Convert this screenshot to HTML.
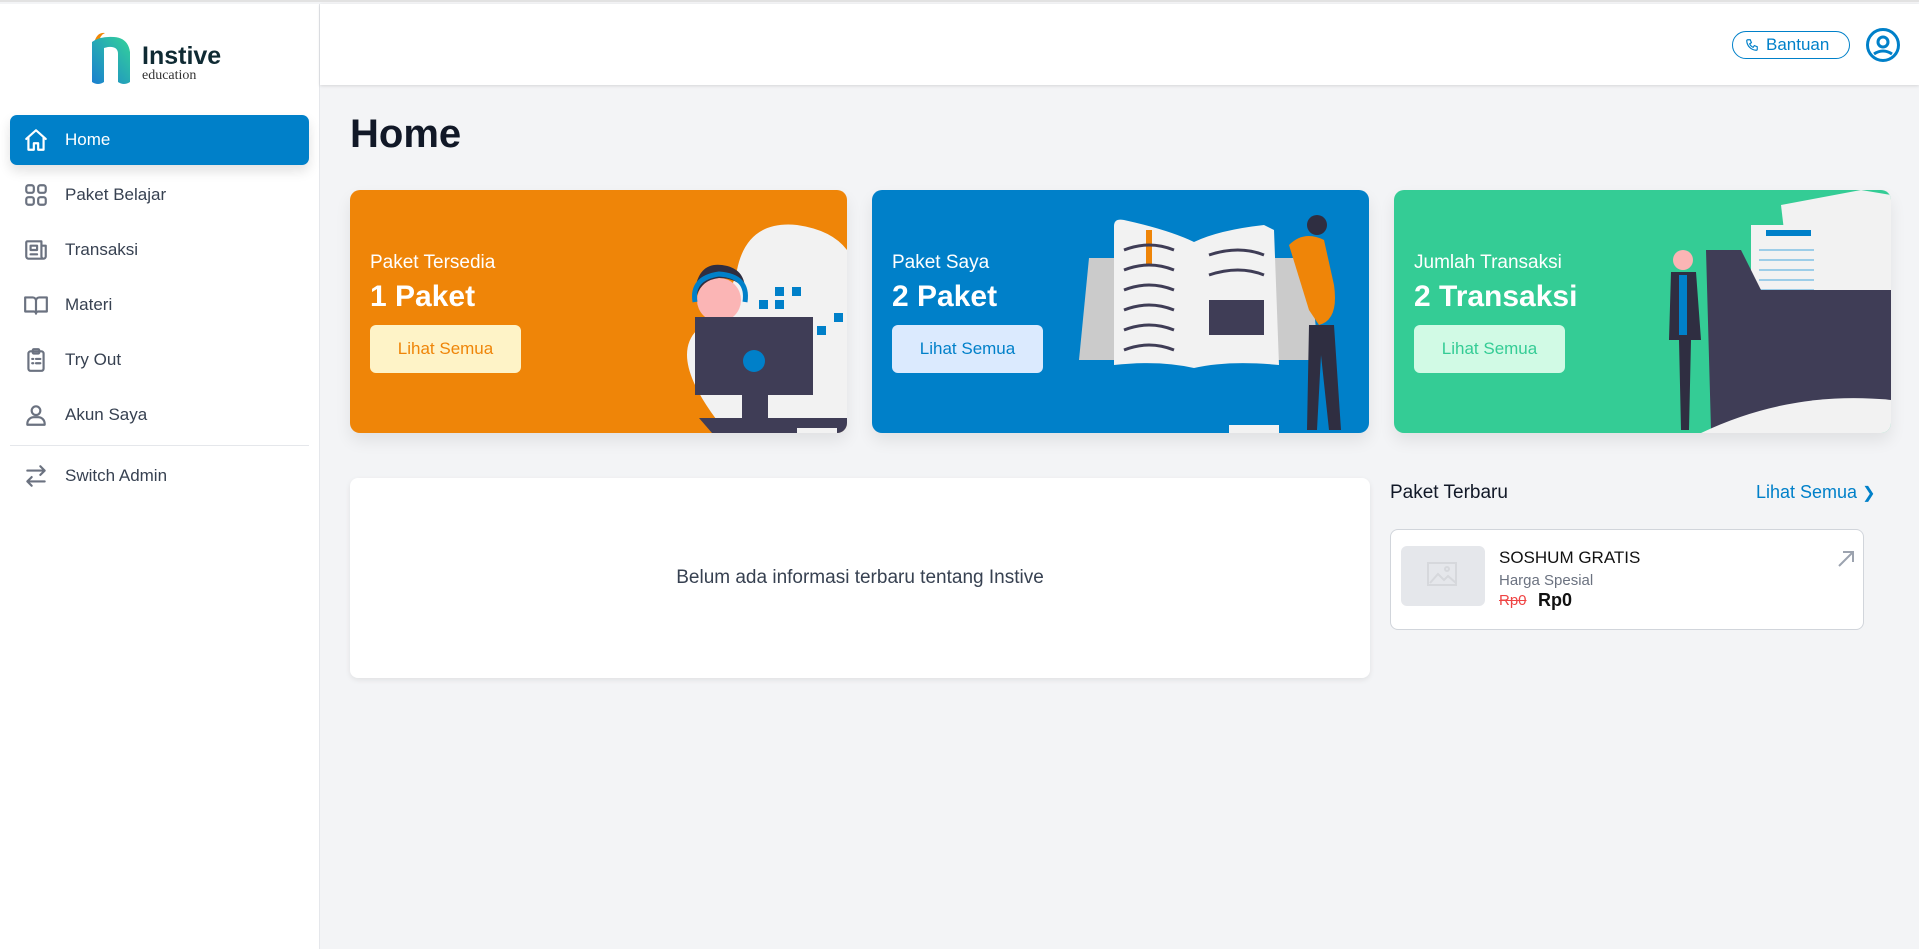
<!DOCTYPE html>
<html><head><meta charset="utf-8"><style>
*{box-sizing:border-box;margin:0;padding:0}
body{width:1919px;height:947px;overflow:hidden;background:#f3f4f6;font-family:"Liberation Sans",sans-serif;position:relative;border-top:2px solid #e2e2e2}
.side{position:absolute;left:0;top:2px;width:320px;height:945px;background:#fff;border-right:1px solid #e5e7eb}
.hdr{position:absolute;left:320px;top:2px;right:0;height:81px;background:#fff;box-shadow:0 1px 3px rgba(0,0,0,.12)}
.nav{position:absolute;left:10px;width:299px;height:50px;border-radius:7px;display:flex;align-items:center;font-size:17px;color:#374151}
.nav svg{position:absolute;left:13px;width:26px;height:26px;fill:none;stroke:#6b7280;stroke-width:2;stroke-linecap:round;stroke-linejoin:round}
.nav span{position:absolute;left:55px}
.nav.act{background:#0080c9;color:#fff;box-shadow:0 6px 12px rgba(0,0,0,.12)}
.nav.act svg{stroke:#fff}
.card{position:absolute;top:188px;width:497px;height:243px;border-radius:10px;overflow:hidden;box-shadow:0 8px 16px rgba(0,0,0,.08)}
.card .t{position:absolute;left:20px;top:62px;color:#fff;font-size:19px}
.card .n{position:absolute;left:20px;top:90px;color:#fff;font-size:30px;font-weight:bold}
.card .b{position:absolute;left:20px;top:135px;width:151px;height:48px;border-radius:6px;font-size:17px;display:flex;align-items:center;justify-content:center}
.card svg{position:absolute;right:0;top:0}
</style></head><body>
<div class="side">
 <svg style="position:absolute;left:90px;top:26px" width="50" height="56" viewBox="0 0 50 56"><defs><linearGradient id="g" x1="0" y1="1" x2="1" y2="0"><stop offset="0" stop-color="#1a7fd0"/><stop offset="1" stop-color="#34d399"/></linearGradient></defs><path d="M5 10 Q8 2 15 3 Q10 5 9 12Z" fill="#f08708"/><path d="M2 12 Q10 6 24 7 Q38 8 40 22 L40 52 Q34 56 28 52 L28 24 Q28 16 18 17 L14 18 L14 52 Q8 56 2 52Z" fill="url(#g)"/></svg>
 <div style="position:absolute;left:142px;top:38px;font-size:25px;font-weight:bold;color:#0f2a33">Instive</div>
 <div style="position:absolute;left:142px;top:64px;font-size:14px;color:#333;font-family:'Liberation Serif',serif">education</div>
 <div class="nav act" style="top:111px"><svg viewBox="0 0 24 24"><path d="M3 11 12 3l9 8M5 9.5V21h5v-6h4v6h5V9.5"/></svg><span>Home</span></div>
 <div class="nav" style="top:166px"><svg viewBox="0 0 24 24"><rect x="3" y="3" width="7" height="7" rx="2"/><rect x="14" y="3" width="7" height="7" rx="2"/><rect x="3" y="14" width="7" height="7" rx="2"/><rect x="14" y="14" width="7" height="7" rx="2"/></svg><span>Paket Belajar</span></div>
 <div class="nav" style="top:221px"><svg viewBox="0 0 24 24"><path d="M18 20H5a2 2 0 0 1-2-2V5a1 1 0 0 1 1-1h13v14a2 2 0 0 0 2 2 2 2 0 0 0 2-2V8h-4M7 8h6v4H7zM7 16h6"/></svg><span>Transaksi</span></div>
 <div class="nav" style="top:276px"><svg viewBox="0 0 24 24"><path d="M2 5h7a3 3 0 0 1 3 3v12a2 2 0 0 0-2-2H2zM22 5h-7a3 3 0 0 0-3 3v12a2 2 0 0 1 2-2h8z"/></svg><span>Materi</span></div>
 <div class="nav" style="top:331px"><svg viewBox="0 0 24 24"><rect x="5" y="4" width="14" height="18" rx="2"/><rect x="9" y="2" width="6" height="4" rx="1"/><path d="M8.5 11h1M12 11h4M8.5 15h1M12 15h4"/></svg><span>Try Out</span></div>
 <div class="nav" style="top:386px"><svg viewBox="0 0 24 24"><circle cx="12" cy="8" r="4"/><path d="M4 21v-1a6 6 0 0 1 6-6h4a6 6 0 0 1 6 6v1z"/></svg><span>Akun Saya</span></div>
 <div style="position:absolute;left:10px;top:441px;width:299px;border-top:1px solid #e5e7eb"></div>
 <div class="nav" style="top:447px"><svg viewBox="0 0 24 24"><path d="M20 7H4m16 0-4-4m4 4-4 4M4 17h16M4 17l4-4m-4 4 4 4"/></svg><span>Switch Admin</span></div>
</div>
<div class="hdr">
 <div style="position:absolute;left:1412px;top:27px;width:118px;height:28px;border:1.5px solid #0080c9;border-radius:14px;color:#0080c9;font-size:17px;display:flex;align-items:center;padding-left:12px"><svg width="14" height="14" viewBox="0 0 24 24" fill="none" stroke="#0080c9" stroke-width="2"><path d="M5 3h4l2 5-3 2a11 11 0 0 0 6 6l2-3 5 2v4a2 2 0 0 1-2 2A17 17 0 0 1 3 5a2 2 0 0 1 2-2z"/></svg><span style="margin-left:7px">Bantuan</span></div>
 <svg style="position:absolute;left:1545px;top:23px" width="36" height="36" viewBox="0 0 36 36"><circle cx="18" cy="18" r="15.5" fill="none" stroke="#0080c9" stroke-width="3"/><circle cx="18" cy="15" r="5" fill="none" stroke="#0080c9" stroke-width="3"/><path d="M9 27q9-6 18 0" stroke="#0080c9" stroke-width="3" fill="none"/></svg>
</div>
<div style="position:absolute;left:350px;top:110px;font-size:40px;font-weight:bold;color:#111827">Home</div>

<div class="card" style="left:350px;background:#ef8508">
 <div class="t">Paket Tersedia</div><div class="n">1 Paket</div>
 <div class="b" style="background:#fef3c7;color:#ef8508">Lihat Semua</div>
 <svg width="260" height="243" viewBox="0 0 260 243"><path d="M140 243 Q80 170 110 140 Q140 120 150 80 Q160 30 210 35 Q245 40 260 60 V243Z" fill="#f2f2f2"/><g fill="#0080c9"><rect x="188" y="97" width="9" height="9"/><rect x="205" y="97" width="9" height="9"/><rect x="172" y="110" width="9" height="9"/><rect x="188" y="110" width="9" height="9"/><rect x="247" y="123" width="9" height="9"/><rect x="230" y="136" width="9" height="9"/><rect x="188" y="149" width="9" height="9"/><rect x="205" y="149" width="9" height="9"/></g><path d="M125 180 Q130 140 165 140 H200 Q215 150 220 190 Q215 205 190 205 H135Z" fill="#c9c9c9"/><circle cx="132" cy="110" r="22" fill="#fbb5b5"/><path d="M108 100 Q112 72 135 75 Q158 78 158 100 Q150 88 132 88 Q115 90 110 105Z" fill="#2f2e41"/><path d="M108 112 Q104 88 132 84 Q162 86 158 112" fill="none" stroke="#0080c9" stroke-width="5"/><rect x="108" y="127" width="118" height="78" fill="#3f3d56"/><circle cx="167" cy="171" r="11" fill="#0080c9"/><rect x="155" y="205" width="26" height="25" fill="#3f3d56"/><path d="M112 228 H260 V243 H125Z" fill="#3f3d56"/><rect x="210" y="238" width="40" height="5" fill="#f2f2f2"/></svg>
</div>
<div class="card" style="left:872px;background:#0080c9">
 <div class="t">Paket Saya</div><div class="n">2 Paket</div>
 <div class="b" style="background:#dbeafe;color:#0080c9">Lihat Semua</div>
 <svg width="290" height="243" viewBox="0 0 290 243"><path d="M10 68 H230 L240 170 H0Z" fill="#cbcbcb"/><path d="M35 36 Q35 28 45 30 Q90 40 115 52 Q140 40 185 35 L195 40 L200 175 Q150 170 115 178 Q80 170 35 175Z" fill="#f2f2f2"/><rect x="67" y="40" width="6" height="35" fill="#ef8508"/><g stroke="#3f3d56" stroke-width="3" fill="none"><path d="M45 60q25-10 50 0M45 80q25-10 50 0M45 100q25-10 50 0M45 120q25-10 50 0M45 140q25-10 50 0M45 160q25-10 50 0M130 65q30-10 55 0M130 85q30-10 55 0"/></g><path d="M130 110 H185 V145 H130Z" fill="#3f3d56"/><path d="M210 55 Q225 40 245 50 L255 95 Q260 130 240 135 L230 120Z" fill="#ef8508"/><circle cx="238" cy="35" r="10" fill="#2f2e41"/><path d="M230 135 H255 L262 240 H250 L242 165 L238 240 H228Z" fill="#2f2e41"/><rect x="150" y="235" width="50" height="8" fill="#f2f2f2"/></svg>
</div>
<div class="card" style="left:1394px;background:#34cc95">
 <div class="t">Jumlah Transaksi</div><div class="n">2 Transaksi</div>
 <div class="b" style="background:#d1fae5;color:#34cc95">Lihat Semua</div>
 <svg width="250" height="243" viewBox="0 0 250 243"><path d="M140 15 L220 0 L250 5 V100 H150Z" fill="#f2f2f2"/><path d="M110 35 H175 V110 H110Z" fill="#f2f2f2"/><rect x="125" y="40" width="45" height="6" fill="#0080c9"/><g stroke="#9ccde8" stroke-width="2"><path d="M118 60h55M118 70h55M118 80h55M118 90h55M118 100h55"/></g><path d="M65 60 H100 L120 100 H250 V210 Q180 220 120 240 H70Z" fill="#3f3d56"/><path d="M60 243 Q150 200 250 210 V243Z" fill="#f2f2f2"/><circle cx="42" cy="70" r="10" fill="#fbb5b5"/><path d="M30 82 H55 L60 150 H50 L48 240 H40 L38 150 H28Z" fill="#2f2e41"/><rect x="38" y="85" width="8" height="60" fill="#0080c9"/></svg>
</div>

<div style="position:absolute;left:350px;top:476px;width:1020px;height:200px;background:#fff;border-radius:8px;box-shadow:0 2px 6px rgba(0,0,0,.08);display:flex;align-items:center;justify-content:center;font-size:19px;color:#374151">Belum ada informasi terbaru tentang Instive</div>

<div style="position:absolute;left:1390px;top:480px;font-size:19px;color:#111827">Paket Terbaru</div>
<div style="position:absolute;left:1756px;top:480px;font-size:18px;color:#0080c9">Lihat Semua <span style="font-size:16px">&#x276F;</span></div>
<div style="position:absolute;left:1390px;top:527px;width:474px;height:101px;background:#fff;border:1px solid #d1d5db;border-radius:8px">
 <div style="position:absolute;left:10px;top:16px;width:84px;height:60px;background:#e5e7eb;border-radius:6px"><svg style="position:absolute;left:26px;top:16px" width="34" height="28" viewBox="0 0 34 28" fill="none" stroke="#d6d8dc" stroke-width="2"><rect x="1" y="1" width="28" height="22"/><path d="M3 21l8-9 6 6 4-4 8 7"/><circle cx="20" cy="7" r="2"/></svg></div>
 <div style="position:absolute;left:108px;top:18px;font-size:17px;color:#111">SOSHUM GRATIS</div>
 <div style="position:absolute;left:108px;top:42px;font-size:15px;color:#6b7280">Harga Spesial</div>
 <div style="position:absolute;left:108px;top:62px;font-size:15px;color:#ef4444;text-decoration:line-through">Rp0</div>
 <div style="position:absolute;left:147px;top:60px;font-size:18px;color:#111;font-weight:bold">Rp0</div>
 <svg style="position:absolute;left:466px;top:20px;margin-left:-20px" width="18" height="18" viewBox="0 0 18 18" stroke="#9ca3af" stroke-width="2" fill="none"><path d="M2 16 16 2M6 2h10v10"/></svg>
</div>
</body></html>
